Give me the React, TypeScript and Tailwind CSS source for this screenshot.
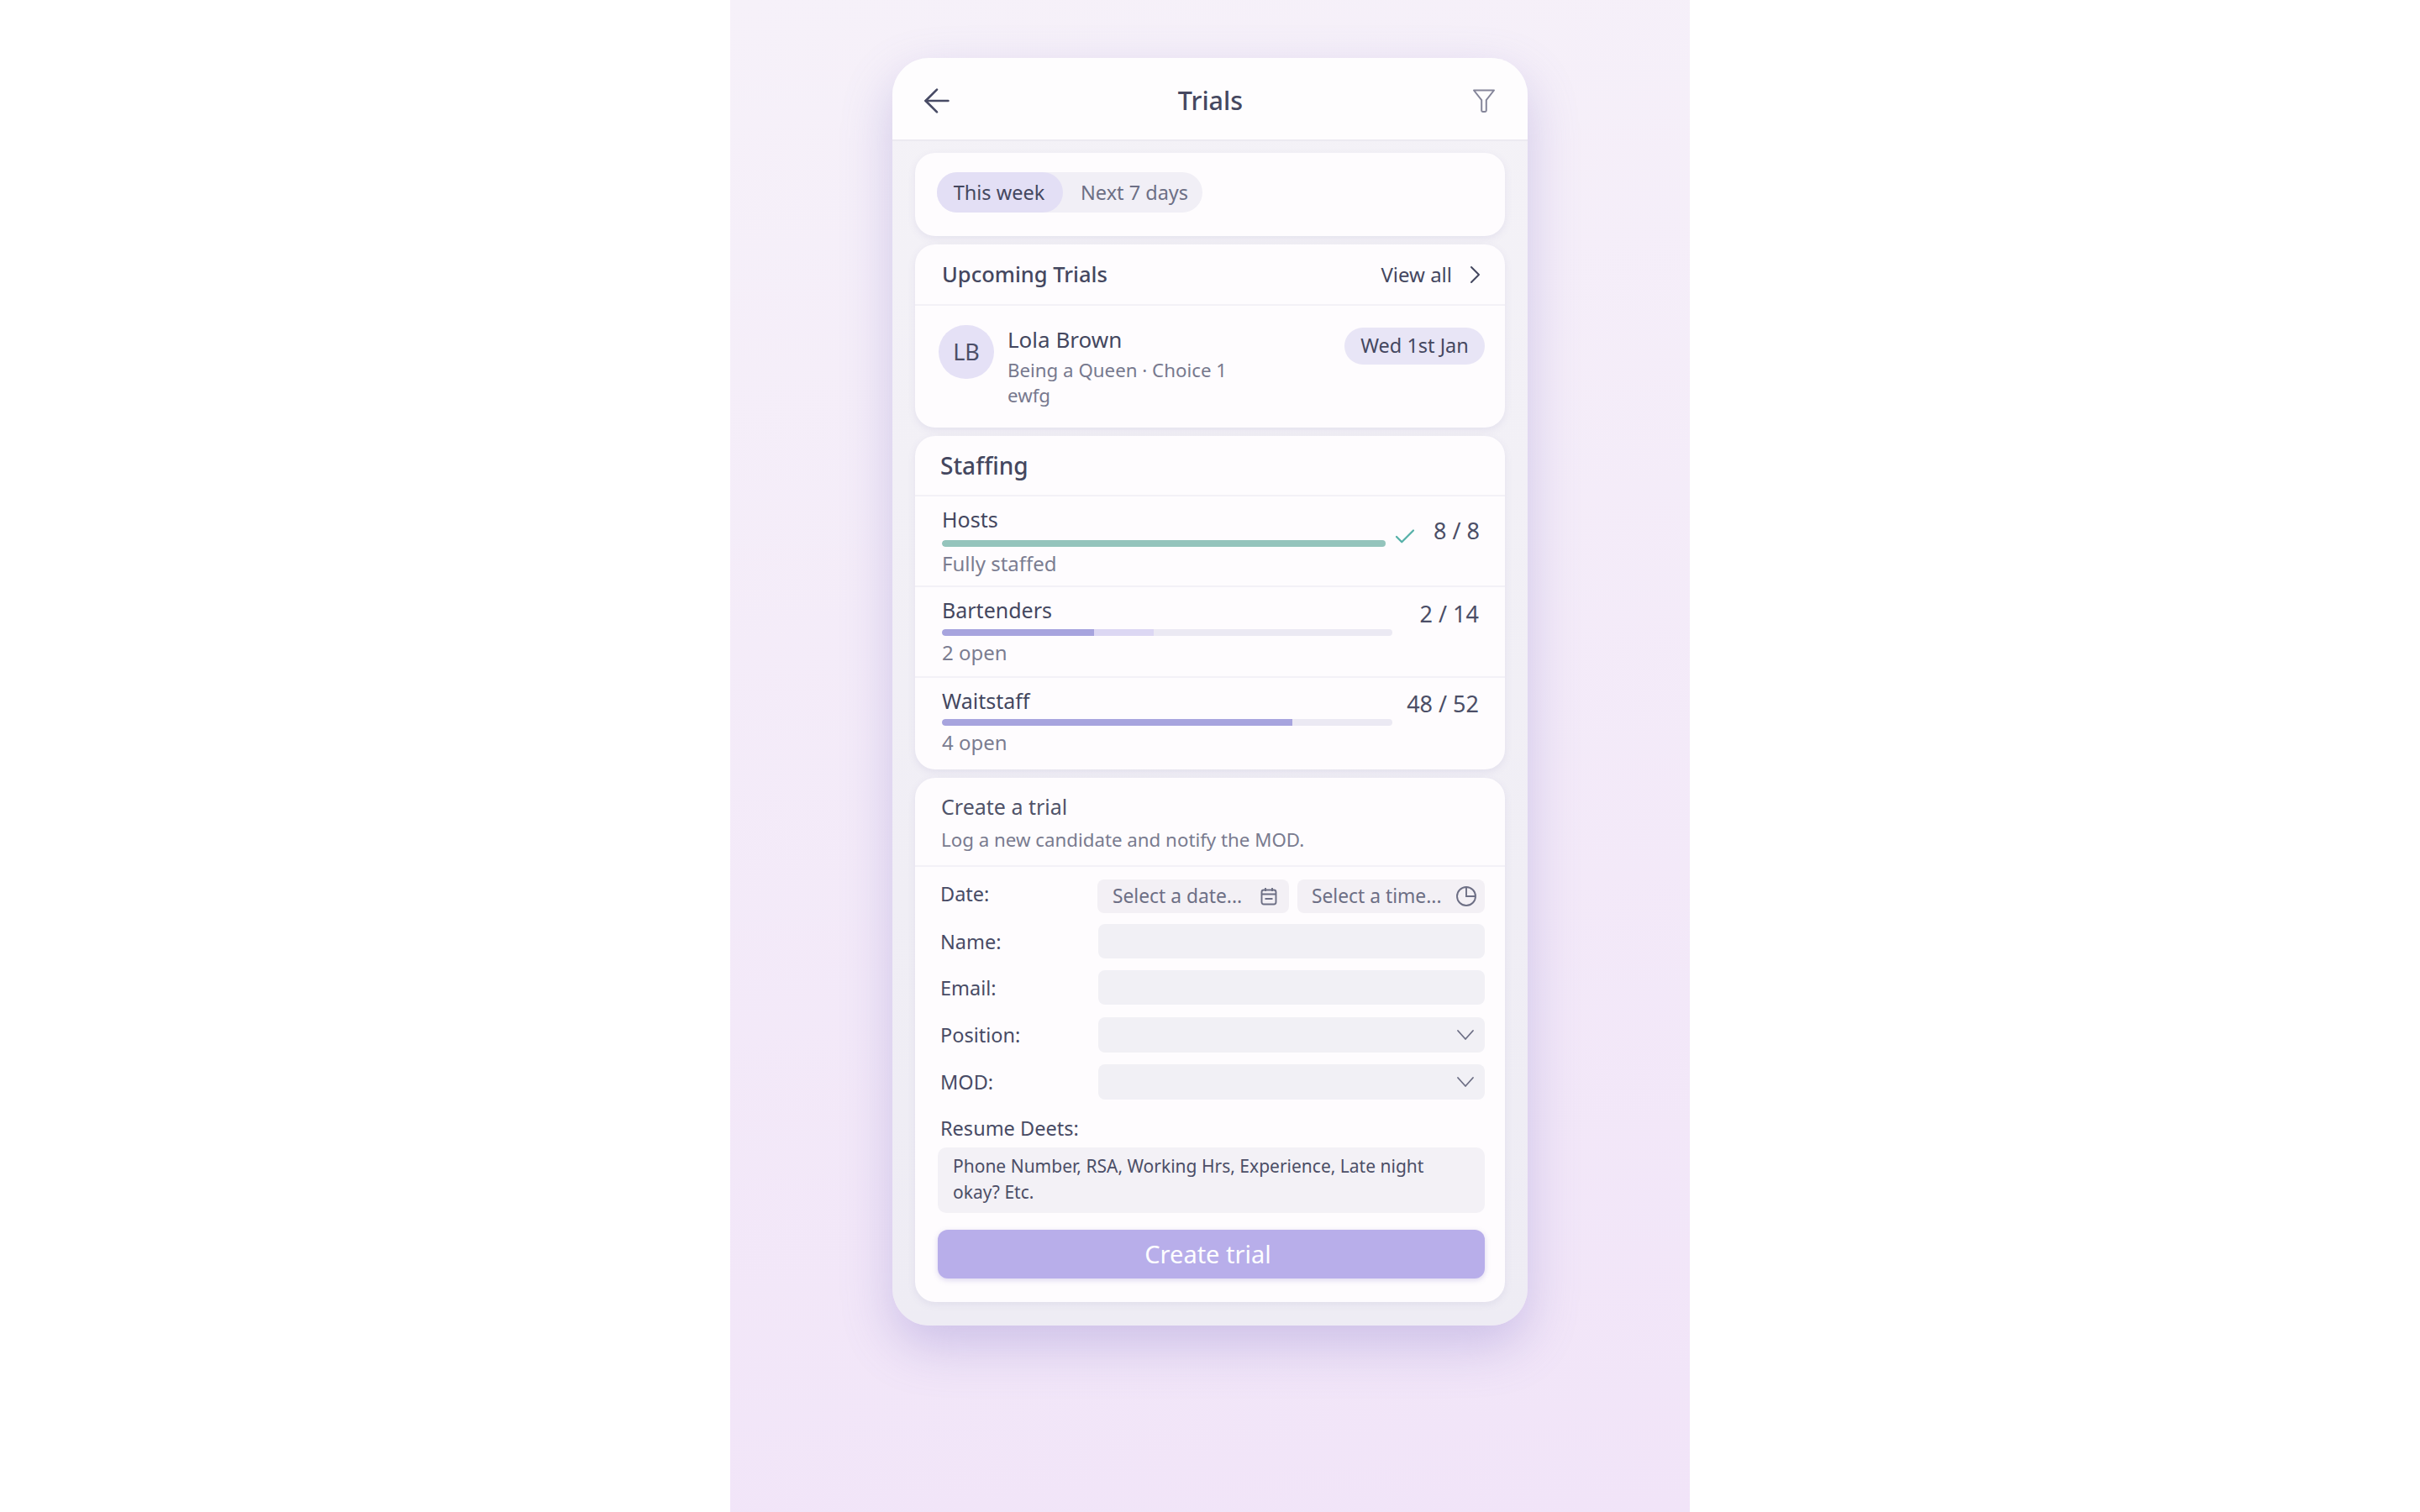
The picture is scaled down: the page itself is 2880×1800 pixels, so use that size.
import { ArrowLeft, Check } from 'lucide-react';

function Funnel() {
  return (
    <svg width="30" height="30" viewBox="0 0 30 30" fill="none" stroke="#85869a" strokeWidth="2" strokeLinejoin="round">
      <path d="M3 2.5h24l-9.2 11.6v12.4q0 1.4-1.4 1.4h-2.8q-1.4 0-1.4-1.4V14.1z" />
    </svg>
  );
}

function CalendarIcon() {
  return (
    <svg width="20" height="22" viewBox="0 0 20 22" fill="none" stroke="#6d6f85" strokeWidth="1.9">
      <rect x="1.5" y="3.5" width="17" height="17" rx="2.5" />
      <path d="M6 1v4M14 1v4M1.5 8.5h17M5.5 14h9" />
    </svg>
  );
}

function ClockIcon() {
  return (
    <svg width="26" height="26" viewBox="0 0 26 26" fill="none" stroke="#6d6f85" strokeWidth="1.9">
      <circle cx="13" cy="13" r="11" />
      <path d="M13 2v11h11" />
    </svg>
  );
}

function Chevron() {
  return (
    <svg width="22" height="14" viewBox="0 0 22 14" fill="none" stroke="#6d6f85" strokeWidth="1.8" strokeLinecap="round" strokeLinejoin="round">
      <path d="M2 2l9 10 9-10" />
    </svg>
  );
}

function ChevronR() {
  return (
    <svg width="16" height="22" viewBox="0 0 16 22" fill="none" stroke="#44475f" strokeWidth="2" strokeLinecap="round" strokeLinejoin="round">
      <path d="M4 2l9 9-9 9" />
    </svg>
  );
}

function Row({ label, children, labelClass = '' }: { label: string; children: React.ReactNode; labelClass?: string }) {
  return (
    <div className="flex items-center">
      <span className={`w-[188px] text-[23.5px] leading-[32px] text-[#484b65] ${labelClass}`}>{label}</span>
      <div className="flex-1">{children}</div>
    </div>
  );
}

function Bar({ label, note, count, dark, light, tail, check, countClass, barClass }: { label: string; note: string; count: string; dark: number; light?: number; tail?: boolean; check?: boolean; countClass: string; barClass: string }) {
  return (
    <div className="h-[108px] flex border-t-2 border-[#f3f1f7] pl-[32px] pr-[31px]">
      <div className="w-[536px] shrink-0">
        <div className="text-[25px] leading-[34px] mt-[10px] text-[#44475f]">{label}</div>
        <div className={`h-2 rounded-full overflow-hidden flex ${barClass} ${tail ? 'bg-[#ebe9f3]' : ''}`}>
          <div className={`rounded-l-full h-full ${check ? 'bg-[#94c4bc] rounded-r-full' : 'bg-[#a7a4de]'}`} style={{ width: dark }} />
          {light ? <div className="h-full bg-[#dcd7f3]" style={{ width: light }} /> : null}
        </div>
        <div className="text-[24px] leading-[32px] mt-[4px] text-[#7b7d91]">{note}</div>
      </div>
      <div className="flex-1 flex justify-end items-start">
        {check ? <Check size={30} strokeWidth={1.8} className="text-[#55b0a8] mt-[33px] mr-[19px] shrink-0" /> : null}
        <span className={`text-[27px] leading-[36px] whitespace-nowrap text-[#4b4e66] ${countClass}`}>{count}</span>
      </div>
    </div>
  );
}

const card = 'bg-[#fefcfe] rounded-[24px] shadow-[0_3px_10px_rgba(110,100,170,0.1)]';

export default function App() {
  return (
    <div className="min-h-screen bg-white flex justify-center font-['Noto_Sans',sans-serif]">
      <div className="w-[1142px] h-[1800px] pt-[69px] bg-[linear-gradient(170deg,#f6f1f9,#f1e4f8)]">
        <div className="w-[756px] h-[1509px] mx-auto rounded-[44px] overflow-hidden bg-gradient-to-b from-[#f4f2f7] to-[#eeecf4] shadow-[0_24px_60px_rgba(120,105,195,0.3)]">
          <div className="h-[99px] bg-[#fefdfe] border-b-2 border-[#eceaf1] flex items-center justify-between pt-[4px] pl-[30px] pr-[37px]">
            <ArrowLeft size={46} strokeWidth={1.4} className="text-[#484b65]" />
            <span className="text-[30.5px] font-medium text-[#454860] mr-[8px]">Trials</span>
            <Funnel />
          </div>
          <div className="px-[27px] pt-[14px] flex flex-col gap-[10px]">
            <div className={`${card} h-[99px] pl-[26px] pt-[23px]`}>
              <div className="w-[316px] h-[48px] rounded-full bg-[#f1eff6] flex items-center">
                <span className="w-[150px] h-full pt-[2px] pr-[2px] rounded-full bg-[#e3dff5] flex items-center justify-center text-[23.5px] text-[#44475f]">This week</span>
                <span className="ml-[21px] pt-[2px] text-[23.5px] text-[#6d6f85]">Next 7 days</span>
              </div>
            </div>

            <div className={`${card} h-[218px]`}>
              <div className="h-[73px] flex items-center justify-between pl-[32px] pr-[28px] border-b-2 border-[#f3f1f7]">
                <span className="text-[25.5px] font-medium text-[#44475f]">Upcoming Trials</span>
                <div className="flex items-center gap-[19px] text-[24px] text-[#44475f]">
                  View all
                  <ChevronR />
                </div>
              </div>
              <div className="flex pl-[28px] pr-[24px] pt-[22px]">
                <div className="w-[66px] h-[64px] mt-[1px] rounded-full bg-[#e5e1f6] flex items-center justify-center text-[27px] text-[#4b4e66]">LB</div>
                <div className="ml-[16px] flex-1">
                  <div className="text-[26px] leading-[36px] text-[#44475f]">Lola Brown</div>
                  <div className="text-[22.3px] leading-[30px] mt-[4px] text-[#77798e]">Being a Queen · Choice 1</div>
                  <div className="text-[22.3px] leading-[30px] text-[#77798e]">ewfg</div>
                </div>
                <div className="w-[167px] h-[44px] mt-[4px] rounded-full bg-[#e8e5f6] flex items-center justify-center text-[23.5px] text-[#44475f]">Wed 1st Jan</div>
              </div>
            </div>

            <div className={`${card} h-[397px] overflow-hidden`}>
              <div className="h-[70px] flex items-center pl-[30px] text-[28px] font-medium text-[#44475f]">Staffing</div>
              <Bar label="Hosts" note="Fully staffed" count="8 / 8" dark={528} check countClass="mt-[23px]" barClass="mt-[8px]" />
              <Bar label="Bartenders" note="2 open" count="2 / 14" dark={181} light={71} tail countClass="mt-[14px]" barClass="mt-[6px]" />
              <Bar label="Waitstaff" note="4 open" count="48 / 52" dark={417} tail countClass="mt-[13px]" barClass="mt-[5px]" />
            </div>

            <div className={`${card} h-[624px]`}>
              <div className="h-[106px] pl-[31px] pt-[16px] border-b-2 border-[#f3f1f7]">
                <div className="text-[25px] leading-[36px] text-[#505369]">Create a trial</div>
                <div className="text-[22.3px] leading-[32px] mt-[6px] text-[#797b8f]">Log a new candidate and notify the MOD.</div>
              </div>
              <div className="pl-[30px] pr-[24px] pt-[15px] flex flex-col">
                <Row label="Date:" labelClass="pb-[7px]">
                  <div className="flex gap-[10px] text-[22.8px] text-[#6d6f85]">
                    <div className="w-[228px] h-[40px] rounded-[8px] bg-[#f3f0f5] flex items-center justify-between pl-[18px] pr-[14px]">
                      <span>Select a date...</span>
                      <CalendarIcon />
                    </div>
                    <div className="w-[223px] h-[40px] rounded-[8px] bg-[#f3f0f5] flex items-center justify-between pl-[17px] pr-[9px]">
                      <span>Select a time...</span>
                      <ClockIcon />
                    </div>
                  </div>
                </Row>
                <div className="mt-[13px]">
                  <Row label="Name:"><div className="h-[41px] rounded-[8px] bg-[#f1f0f5]" /></Row>
                </div>
                <div className="mt-[14px]">
                  <Row label="Email:"><div className="h-[41px] rounded-[8px] bg-[#f1f0f5]" /></Row>
                </div>
                <div className="mt-[15px]">
                  <Row label="Position:">
                    <div className="h-[42px] rounded-[8px] bg-[#f1f0f5] flex items-center justify-end pr-[12px]"><Chevron /></div>
                  </Row>
                </div>
                <div className="mt-[14px]">
                  <Row label="MOD:">
                    <div className="h-[42px] rounded-[8px] bg-[#f1f0f5] flex items-center justify-end pr-[12px]"><Chevron /></div>
                  </Row>
                </div>
                <div className="text-[23.5px] leading-[32px] mt-[18px] text-[#484b65]">Resume Deets:</div>
              </div>
              <div className="pl-[27px] pr-[24px]">
                <div className="mt-[7px] h-[78px] rounded-[10px] bg-[#f3f1f6] pl-[18px] pr-[60px] pt-[7px] text-[21px] leading-[31px] text-[#4b4e66]">
                  Phone Number, RSA, Working Hrs, Experience, Late night okay? Etc.
                </div>
                <div className="mt-[20px] h-[58px] rounded-[12px] bg-[#b8aeea] flex items-center justify-center pr-[8px] text-[29px] text-white shadow-[0_2px_6px_rgba(120,105,195,0.25)]">Create trial</div>
              </div>
            </div>
          </div>
        </div>
      </div>
    </div>
  );
}
